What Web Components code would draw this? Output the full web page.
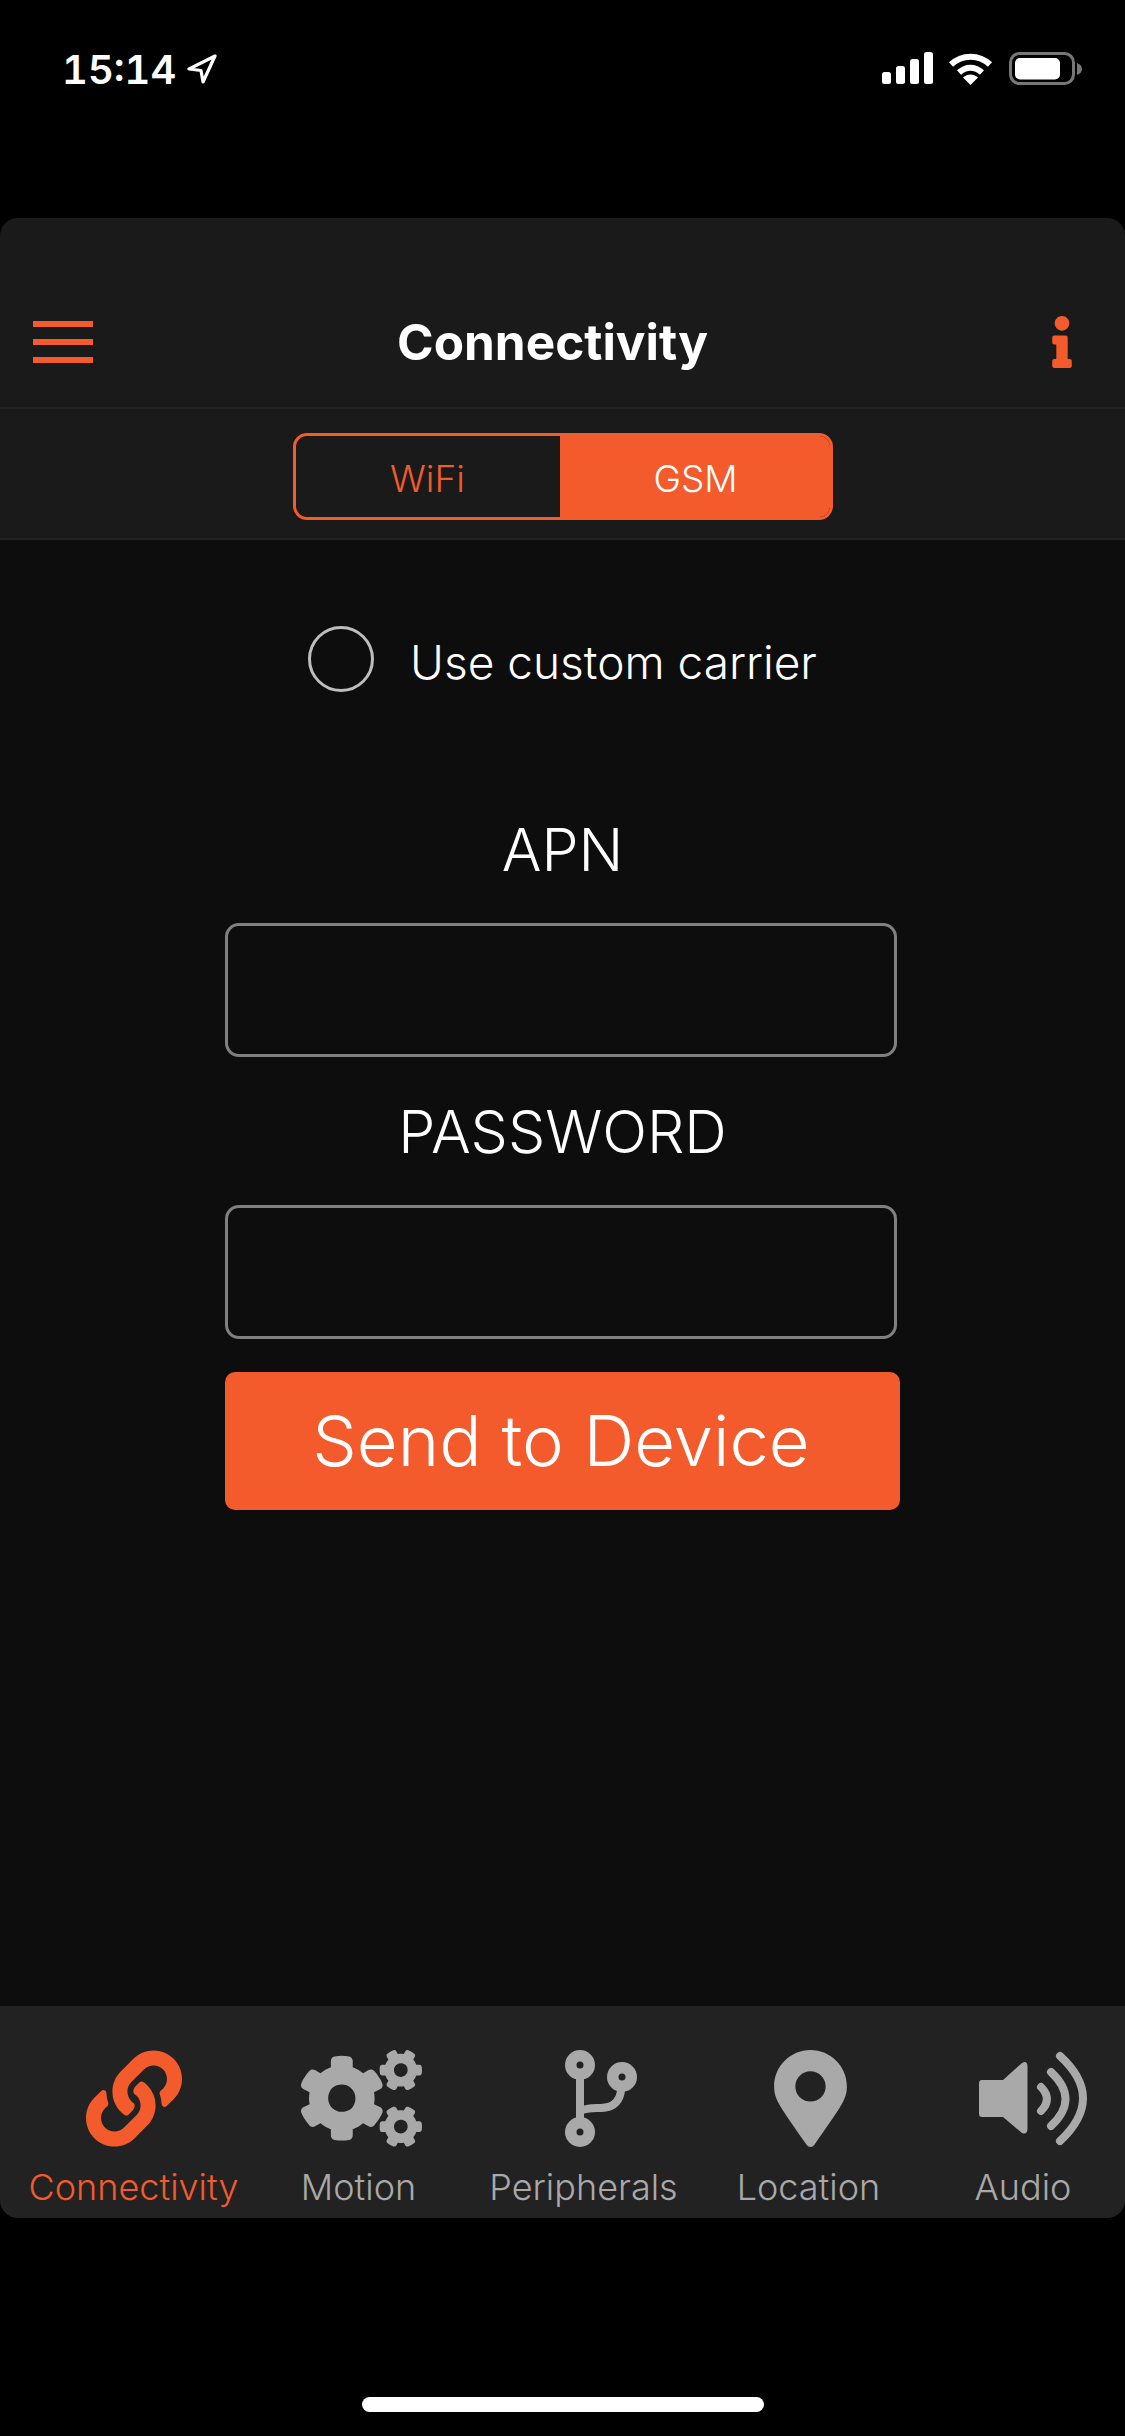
<!DOCTYPE html>
<html lang="en">
<head>
<meta charset="utf-8">
<title>Connectivity</title>
<style>
  :root {
    --color-accent: #f35b2c;
    --color-muted: #a9a9a9;
    --text-font: Inter, "Liberation Sans", sans-serif;
  }

  html, body {
    margin: 0;
    background-color: #000;
  }

  body {
    width: 1125px;
    height: 2436px;
    overflow: hidden;
    font-family: var(--text-font);
    color: #fff;
  }
</style>
</head>
<body>
<phone-shell>
  <status-bar time="15:14"></status-bar>
  <app-screen>
    <app-header title="Connectivity"></app-header>
    <segmented-control left="WiFi" right="GSM"></segmented-control>
    <main-panel>
      <radio-row>Use custom carrier</radio-row>
      <form-field label="APN"></form-field>
      <form-field label="PASSWORD"></form-field>
      <send-button>Send to Device</send-button>
    </main-panel>
    <tab-bar>
      <tab-item label="Connectivity" icon="link" active></tab-item>
      <tab-item label="Motion" icon="cogs"></tab-item>
      <tab-item label="Peripherals" icon="branch"></tab-item>
      <tab-item label="Location" icon="pin"></tab-item>
      <tab-item label="Audio" icon="audio" class="last"></tab-item>
    </tab-bar>
  </app-screen>
  <home-indicator></home-indicator>
</phone-shell>

<script>
  const ICONS = {
    link: `<svg width="96" height="97" viewBox="0 0 512 512" fill="currentColor"><path d="M326.612 185.391c59.747 59.809 58.927 155.698.36 214.59-.11.12-.24.25-.36.37l-67.2 67.2c-59.27 59.27-155.699 59.262-214.96 0-59.27-59.26-59.27-155.7 0-214.96l37.106-37.106c9.84-9.84 26.786-3.3 27.294 10.606.648 17.722 3.826 35.527 9.69 52.721 1.986 5.822.567 12.262-3.783 16.612l-13.087 13.087c-28.026 28.026-28.905 73.66-1.155 101.96 28.024 28.579 74.086 28.749 102.325.51l67.2-67.19c28.191-28.191 28.073-73.757 0-101.83-3.701-3.694-7.429-6.564-10.341-8.569a16.037 16.037 0 0 1-6.947-12.606c-.396-10.567 3.348-21.456 11.698-29.806l21.054-21.055c5.521-5.521 14.182-6.199 20.584-1.731a152.482 152.482 0 0 1 20.522 17.197zM467.547 44.449c-59.261-59.262-155.69-59.27-214.96 0l-67.2 67.2c-.12.12-.25.25-.36.37-58.566 58.892-59.387 154.781.36 214.59a152.454 152.454 0 0 0 20.521 17.196c6.402 4.468 15.064 3.789 20.584-1.731l21.054-21.055c8.35-8.35 12.094-19.239 11.698-29.806a16.037 16.037 0 0 0-6.947-12.606c-2.912-2.005-6.64-4.875-10.341-8.569-28.073-28.073-28.191-73.639 0-101.83l67.2-67.19c28.239-28.239 74.3-28.069 102.325.51 27.75 28.3 26.872 73.934-1.155 101.96l-13.087 13.087c-4.35 4.35-5.769 10.79-3.783 16.612 5.864 17.194 9.042 34.999 9.69 52.721.509 13.906 17.454 20.446 27.294 10.606l37.106-37.106c59.271-59.259 59.271-155.699.001-214.959z"/></svg>`,
    cogs: `<svg width="121" height="97" viewBox="0 0 640 512" fill="currentColor" style="margin-left:5px"><path d="M512.1 191l-8.2 14.3c-3 5.3-9.4 7.5-15.1 5.4-11.8-4.4-22.6-10.7-32.1-18.6-4.6-3.8-5.8-10.5-2.8-15.7l8.2-14.3c-6.9-8-12.3-17.3-15.9-27.4h-16.5c-6 0-11.2-4.3-12.2-10.3-2-12-2.1-24.6 0-37.1 1-6 6.2-10.4 12.2-10.4h16.5c3.6-10.1 9-19.4 15.9-27.4l-8.2-14.3c-3-5.2-1.9-11.9 2.8-15.7 9.5-7.9 20.4-14.2 32.1-18.6 5.7-2.1 12.1.1 15.1 5.4l8.2 14.3c10.5-1.9 21.2-1.9 31.7 0L552 6.3c3-5.3 9.4-7.5 15.1-5.4 11.8 4.4 22.6 10.7 32.1 18.6 4.6 3.8 5.8 10.5 2.8 15.7l-8.2 14.3c6.9 8 12.3 17.3 15.9 27.4h16.5c6 0 11.2 4.3 12.2 10.3 2 12 2.1 24.6 0 37.1-1 6-6.2 10.4-12.2 10.4h-16.5c-3.6 10.1-9 19.4-15.9 27.4l8.2 14.3c3 5.2 1.9 11.9-2.8 15.7-9.5 7.9-20.4 14.2-32.1 18.6-5.7 2.1-12.1-.1-15.1-5.4l-8.2-14.3c-10.4 1.9-21.2 1.9-31.7 0zm-10.5-58.8c38.5 29.6 82.4-14.3 52.8-52.8-38.5-29.7-82.4 14.3-52.8 52.8zM386.3 286.1l33.7 16.8c10.1 5.8 14.5 18.1 10.5 29.1-8.9 24.2-26.4 46.4-42.6 65.8-7.4 8.9-20.2 11.1-30.3 5.3l-29.1-16.8c-16 13.7-34.6 24.6-54.9 31.7v33.6c0 11.6-8.3 21.6-19.7 23.6-24.6 4.2-50.4 4.4-75.9 0-11.5-2-20-11.9-20-23.6V418c-20.3-7.2-38.9-18-54.9-31.7L74 403c-10 5.8-22.9 3.6-30.3-5.3-16.2-19.4-33.3-41.6-42.2-65.7-4-10.9.4-23.2 10.5-29.1l33.3-16.8c-3.9-20.9-3.9-42.4 0-63.4L12 205.8c-10.1-5.8-14.6-18.1-10.5-29 8.9-24.2 26-46.4 42.2-65.8 7.4-8.9 20.2-11.1 30.3-5.3l29.1 16.8c16-13.7 34.6-24.6 54.9-31.7V57.1c0-11.5 8.2-21.5 19.6-23.5 24.6-4.2 50.5-4.4 76-.1 11.5 2 20 11.9 20 23.6v33.6c20.3 7.2 38.9 18 54.9 31.7l29.1-16.8c10-5.8 22.9-3.6 30.3 5.3 16.2 19.4 33.2 41.6 42.1 65.8 4 10.9.1 23.2-10 29.1l-33.7 16.8c3.9 21 3.9 42.5 0 63.5zm-117.6 21.1c59.2-77-28.7-164.9-105.7-105.7-59.2 77 28.7 164.9 105.7 105.7zm243.4 182.7l-8.2 14.3c-3 5.3-9.4 7.5-15.1 5.4-11.8-4.4-22.6-10.7-32.1-18.6-4.6-3.8-5.8-10.5-2.8-15.7l8.2-14.3c-6.9-8-12.3-17.3-15.9-27.4h-16.5c-6 0-11.2-4.3-12.2-10.3-2-12-2.1-24.6 0-37.1 1-6 6.2-10.4 12.2-10.4h16.5c3.6-10.1 9-19.4 15.9-27.4l-8.2-14.3c-3-5.2-1.9-11.9 2.8-15.7 9.5-7.9 20.4-14.2 32.1-18.6 5.7-2.1 12.1.1 15.1 5.4l8.2 14.3c10.5-1.9 21.2-1.9 31.7 0l8.2-14.3c3-5.3 9.4-7.5 15.1-5.4 11.8 4.4 22.6 10.7 32.1 18.6 4.6 3.8 5.8 10.5 2.8 15.7l-8.2 14.3c6.9 8 12.3 17.3 15.9 27.4h16.5c6 0 11.2 4.3 12.2 10.3 2 12 2.1 24.6 0 37.1-1 6-6.2 10.4-12.2 10.4h-16.5c-3.6 10.1-9 19.4-15.9 27.4l8.2 14.3c3 5.2 1.9 11.9-2.8 15.7-9.5 7.9-20.4 14.2-32.1 18.6-5.7 2.1-12.1-.1-15.1-5.4l-8.2-14.3c-10.4 1.9-21.2 1.9-31.7 0zM501.6 431c38.5 29.6 82.4-14.3 52.8-52.8-38.5-29.6-82.4 14.3-52.8 52.8z"/></svg>`,
    branch: `<svg width="72" height="97" viewBox="0 0 72 97" style="margin-left:34px"><g fill="none" stroke="currentColor" stroke-width="8"><path d="M15 15V82"/><path d="M15 61C26 56 36 60 46 56C54 52 57 45 57 27"/></g><g fill="currentColor"><circle cx="15" cy="15" r="15"/><circle cx="57" cy="27" r="15"/><circle cx="15" cy="82" r="15"/></g><g fill="#222"><circle cx="15" cy="15" r="3.5"/><circle cx="57" cy="27" r="3.5"/><circle cx="15" cy="82" r="3.5"/></g></svg>`,
    pin: `<svg width="73" height="97" viewBox="0 0 384 512" fill="currentColor" style="margin-left:3px"><path d="M172.268 501.67C26.97 291.031 0 260.973 0 192 0 85.961 85.961 0 192 0s192 85.961 192 192c0 68.973-26.97 99.031-172.268 309.67-9.535 13.774-29.93 13.773-39.464 0zM192 272c44.183 0 80-35.817 80-80s-35.817-80-80-80-80 35.817-80 80 35.817 80 80 80z"/></svg>`,
    audio: `<svg width="110" height="97" viewBox="0 0 110 97" style="margin-left:21px"><path fill="currentColor" d="M3 30H24L43 13Q48 10 48.500 16V79Q48 85 43 83L24 67H3Q0 67 0 64V33Q0 30 3 30Z"/><g fill="none" stroke="currentColor" stroke-width="8" stroke-linecap="round"><path d="M62 37Q74 49 62 61"/><path d="M72 22Q101 49 72 76"/><path d="M81 6Q127 48 81 91"/></g></svg>`
  };

  class PhoneShell extends HTMLElement {
    constructor() {
      super();
      this.attachShadow({mode: 'open'}).innerHTML = `
        <style>
          :host {
            display: flex;
            flex-direction: column;
            width: 1125px;
            height: 2436px;
          }
        </style>
        <slot></slot>`;
    }
  }

  class StatusBar extends HTMLElement {
    connectedCallback() {
      this.attachShadow({mode: 'open'}).innerHTML = `
        <style>
          :host {
            display: flex;
            justify-content: space-between;
            box-sizing: border-box;
            height: 218px;
            padding: 52px 43px 0 62px;
            color: #fff;
          }
          .left, .right {
            display: flex;
            align-items: flex-start;
          }
          .time {
            width: 125px;
            font: 600 40px/36px var(--text-font);
            font-feature-settings: 'tnum';
          }
          .arrow { margin-top: 2px; }
          .wifi { margin-left: 15px; }
          .battery { margin-left: 16px; }
          svg { display: block; }
        </style>
        <div class="left">
          <span class="time">${this.getAttribute('time')}</span>
          <svg class="arrow" width="30" height="30" viewBox="0 0 30 30" fill="none" stroke="#fff" stroke-width="3.2" stroke-linejoin="round"><path d="M28 2L2 15L14 16.5L16 28Z"/></svg>
        </div>
        <div class="right">
          <svg width="51" height="33" viewBox="0 0 51 33" fill="#fff"><rect x="0" y="20" width="9" height="12" rx="2.5"/><rect x="14" y="14" width="9" height="18" rx="2.5"/><rect x="28" y="7" width="9" height="25" rx="2.5"/><rect x="42" y="0" width="9" height="32" rx="2.5"/></svg>
          <svg class="wifi" width="45" height="33" viewBox="0 0 45 33"><g fill="none" stroke="#fff" stroke-width="6"><path d="M3 12.5C14 2 31 2 42 12.5"/><path d="M11 20.5C18 14 27 14 34 20.5"/></g><path fill="#fff" d="M22.5 33L15 25.5C19.500 21.500 25.500 21.500 30 25.500Z"/></svg>
          <svg class="battery" width="73" height="33" viewBox="0 0 73 33"><rect x="1.500" y="1.500" width="63" height="30" rx="9" fill="none" stroke="#777" stroke-width="3"/><rect x="6" y="6" width="45" height="21.500" rx="5" fill="#fff"/><path fill="#777" d="M68 11C71 12 73 14 73 17C73 20 71 22 68 23Z"/></svg>
        </div>`;
    }
  }

  class AppScreen extends HTMLElement {
    constructor() {
      super();
      this.attachShadow({mode: 'open'}).innerHTML = `
        <style>
          :host {
            display: flex;
            flex-direction: column;
            height: 2000px;
            border-radius: 18px;
            overflow: hidden;
            background-color: #0d0d0d;
          }
        </style>
        <slot></slot>`;
    }
  }

  class AppHeader extends HTMLElement {
    connectedCallback() {
      this.attachShadow({mode: 'open'}).innerHTML = `
        <style>
          :host {
            display: grid;
            grid-template-columns: 1fr auto 1fr;
            align-items: center;
            box-sizing: border-box;
            height: 191px;
            padding: 59px 53px 0 33px;
            background-color: #1a1a1a;
            border-bottom: 2px solid #222;
          }
          h1 {
            margin: 0;
            font: 700 49.5px/60px var(--text-font);
            color: #fff;
          }
          .menu {
            display: flex;
            flex-direction: column;
            gap: 12px;
            width: 60px;
          }
          .menu span {
            height: 6px;
            background-color: var(--color-accent);
          }
          .info {
            justify-self: end;
            display: block;
          }
        </style>
        <div class="menu"><span></span><span></span><span></span></div>
        <h1>${this.getAttribute('title')}</h1>
        <svg class="info" width="20" height="52" viewBox="0 0 192 512" fill="#f35b2c"><path d="M20 424.229h20V279.771H20c-11.046 0-20-8.954-20-20V212c0-11.046 8.954-20 20-20h112c11.046 0 20 8.954 20 20v212.229h20c11.046 0 20 8.954 20 20V492c0 11.046-8.954 20-20 20H20c-11.046 0-20-8.954-20-20v-47.771c0-11.046 8.954-20 20-20zM96 0C56.235 0 24 32.235 24 72s32.235 72 72 72 72-32.235 72-72S135.764 0 96 0z"/></svg>`;
    }
  }

  class SegmentedControl extends HTMLElement {
    connectedCallback() {
      this.attachShadow({mode: 'open'}).innerHTML = `
        <style>
          :host {
            display: flex;
            justify-content: center;
            align-items: flex-start;
            box-sizing: border-box;
            height: 131px;
            padding-top: 24px;
            background-color: #1a1a1a;
            border-bottom: 2px solid #222;
          }
          .group {
            display: flex;
            box-sizing: border-box;
            width: 540px;
            height: 87px;
            border: 3px solid var(--color-accent);
            border-radius: 14px;
            overflow: hidden;
            font: 300 37px/86px var(--text-font);
          }
          .group div {
            text-align: center;
          }
          .off {
            width: 264px;
            color: var(--color-accent);
          }
          .on {
            flex: 1;
            padding-left: 2px;
            color: #fff;
            background-color: var(--color-accent);
          }
        </style>
        <div class="group">
          <div class="off">${this.getAttribute('left')}</div>
          <div class="on">${this.getAttribute('right')}</div>
        </div>`;
    }
  }

  class MainPanel extends HTMLElement {
    constructor() {
      super();
      this.attachShadow({mode: 'open'}).innerHTML = `
        <style>
          :host {
            flex: 1;
            display: flex;
            flex-direction: column;
            align-items: center;
            padding-top: 86px;
            background-color: #0d0d0d;
          }
        </style>
        <slot></slot>`;
    }
  }

  class RadioRow extends HTMLElement {
    constructor() {
      super();
      this.attachShadow({mode: 'open'}).innerHTML = `
        <style>
          :host {
            display: flex;
            align-items: center;
            gap: 36px;
            height: 66px;
            margin-bottom: 119px;
            color: #fff;
            font: 300 46px/66px var(--text-font);
          }
          .dot {
            box-sizing: border-box;
            width: 66px;
            height: 66px;
            border: 3px solid #bdbdbd;
            border-radius: 50%;
          }
          .text { padding-top: 6px; }
        </style>
        <div class="dot"></div>
        <div class="text"><slot></slot></div>`;
    }
  }

  class FormField extends HTMLElement {
    connectedCallback() {
      this.attachShadow({mode: 'open'}).innerHTML = `
        <style>
          :host {
            display: flex;
            flex-direction: column;
            align-items: center;
            width: 675px;
            margin-bottom: 36px;
          }
          label {
            height: 78px;
            margin-bottom: 34px;
            color: #fff;
            font: 300 59px/78px var(--text-font);
          }
          input {
            display: block;
            box-sizing: border-box;
            width: 672px;
            height: 134px;
            margin-right: 3px;
            border: 3px solid #808080;
            border-radius: 14px;
            background: transparent;
            outline: none;
          }
        </style>
        <label for="field">${this.getAttribute('label')}</label>
        <input id="field" type="text">`;
    }
  }

  class SendButton extends HTMLElement {
    constructor() {
      super();
      this.attachShadow({mode: 'open'}).innerHTML = `
        <style>
          :host {
            display: flex;
            align-items: center;
            justify-content: center;
            box-sizing: border-box;
            width: 675px;
            height: 138px;
            padding-right: 3px;
            margin-top: -3px;
            border-radius: 10px;
            background-color: var(--color-accent);
            color: #fff;
            font: 300 70.5px/138px var(--text-font);
          }
        </style>
        <slot></slot>`;
    }
  }

  class TabBar extends HTMLElement {
    constructor() {
      super();
      this.attachShadow({mode: 'open'}).innerHTML = `
        <style>
          :host {
            display: flex;
            box-sizing: border-box;
            height: 212px;
            padding: 44px 0 0 21px;
            background-color: #222;
          }
        </style>
        <slot></slot>`;
    }
  }

  class TabItem extends HTMLElement {
    connectedCallback() {
      const color = this.hasAttribute('active') ? 'var(--color-accent)' : 'var(--color-muted)';
      this.attachShadow({mode: 'open'}).innerHTML = `
        <style>
          :host {
            flex: none;
            display: flex;
            flex-direction: column;
            align-items: center;
            width: 225px;
            color: ${color};
          }
          :host(.last) { width: 204px; }
          svg { display: block; }
          span {
            margin-top: 18px;
            white-space: nowrap;
            font: 300 36px/44px var(--text-font);
          }
        </style>
        ${ICONS[this.getAttribute('icon')]}
        <span>${this.getAttribute('label')}</span>`;
    }
  }

  class HomeIndicator extends HTMLElement {
    constructor() {
      super();
      this.attachShadow({mode: 'open'}).innerHTML = `
        <style>
          :host {
            display: flex;
            justify-content: center;
            padding-top: 179px;
          }
          div {
            width: 402px;
            height: 15px;
            border-radius: 8px;
            background-color: #fff;
          }
        </style>
        <div></div>`;
    }
  }

  customElements.define('phone-shell', PhoneShell);
  customElements.define('status-bar', StatusBar);
  customElements.define('app-screen', AppScreen);
  customElements.define('app-header', AppHeader);
  customElements.define('segmented-control', SegmentedControl);
  customElements.define('main-panel', MainPanel);
  customElements.define('radio-row', RadioRow);
  customElements.define('form-field', FormField);
  customElements.define('send-button', SendButton);
  customElements.define('tab-bar', TabBar);
  customElements.define('tab-item', TabItem);
  customElements.define('home-indicator', HomeIndicator);
</script>
</body>
</html>
